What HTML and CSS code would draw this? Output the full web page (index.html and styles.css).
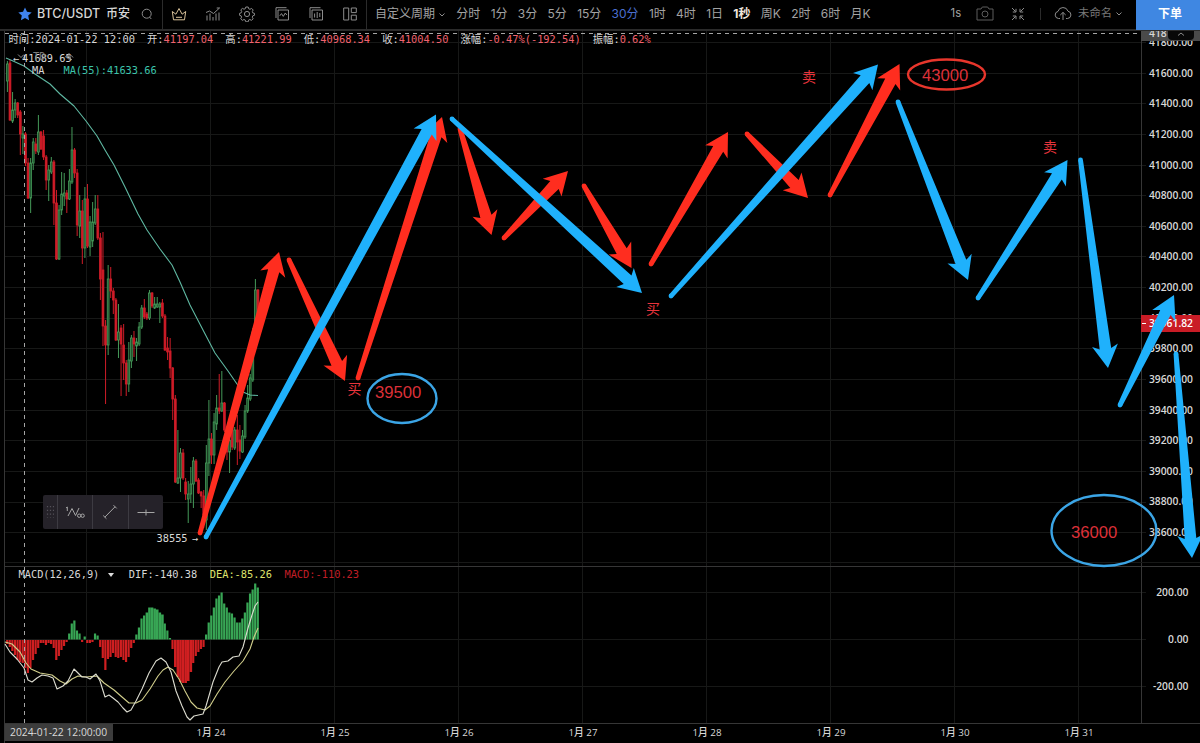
FILE: index.html
```html
<!DOCTYPE html>
<html lang="zh-CN">
<head>
  <meta charset="UTF-8">
  <meta name="viewport" content="width=device-width, initial-scale=1.0">
  <title>BTC/USDT 币安</title>
  <link rel="stylesheet" href="styles.css">
</head>
<body>
  <header class="toolbar">
    <div class="symbol">
      <svg width="14" height="14" viewBox="0 0 14 14"><path fill="#3f83f0" d="M7 .5l2 4.3 4.7.6-3.5 3.2.9 4.7L7 11l-4.1 2.3.9-4.7L.3 5.4 5 4.8z"/></svg>
      <span class="pair">BTC/USDT</span>
      <span class="exchange">币安</span>
      <svg class="icon search" width="12" height="12" viewBox="0 0 12 12"><circle cx="5.7" cy="5.7" r="4.5"/><path d="M8.5 9l1.8 2"/></svg>
    </div>
    <div class="tools">
      <svg class="icon crown" width="16" height="16" viewBox="0 0 16 16"><path d="M2.5 13.8L1.3 5.5l3.6 2.7L8 2.5l3.1 5.7 3.6-2.7-1.2 8.3zM5 11.3h6"/></svg>
      <svg class="icon" width="16" height="16" viewBox="0 0 16 16"><path d="M1 6.5L4.5 5l4 2.5 6-5.5M11.7 2h3M2 14.5v-5M5 14.5v-7M8 14.5V11M11 14.5v-7M14 14.5v-8"/></svg>
      <svg class="icon" width="16" height="16" viewBox="0 0 16 16"><circle cx="8" cy="8" r="2.6"/><path d="M6.8 1h2.4l.5 1.8 1.3.5 1.6-.9 1.6 1.6-.9 1.6.5 1.3 1.8.5v1.8l-1.8.6-.5 1.4.8 1.6-1.6 1.6-1.6-.9-1.3.6-.4 1.7H6.8l-.5-1.7-1.4-.6-1.6.9-1.6-1.6.9-1.6-.5-1.4-1.7-.6V7.4l1.7-.5.6-1.4-.9-1.6 1.6-1.5 1.6.8 1.3-.5z"/></svg>
      <svg class="icon" width="16" height="16" viewBox="0 0 16 16"><path d="M4 4h10.5v10H4zM2 12V1.7h10.5M5.8 9.8l1.7-2.2 1.8 2.8 2-3.4 1.5 2"/></svg>
      <svg class="icon" width="16" height="16" viewBox="0 0 16 16"><path d="M4 4h10.5v10H4zM2 12V1.7h10.5M6.6 7.5v4M9.2 6v6M11.8 7v4"/></svg>
      <svg class="icon" width="16" height="16" viewBox="0 0 16 16"><path d="M1.7 2h5v12h-5zM9.3 2h5v4.6h-5zM9.3 9.2h5V14h-5z"/></svg>
    </div>
    <nav class="intervals">
      <span class="custom">自定义周期<svg class="icon caret" width="8" height="6" viewBox="0 0 8 6"><path d="M1.5 1.5L4 4l2.5-2.5"/></svg></span>
      <span>分时</span>
      <span>1分</span>
      <span>3分</span>
      <span>5分</span>
      <span>15分</span>
      <span class="active">30分</span>
      <span>1时</span>
      <span>4时</span>
      <span>1日</span>
      <span class="strong">1秒</span>
      <span>周K</span>
      <span>2时</span>
      <span>6时</span>
      <span>月K</span>
    </nav>
    <div class="actions">
      <span class="sec">1s</span>
      <svg class="icon dim" width="18" height="15" viewBox="0 0 18 15"><path d="M1 3h4l1.3-2h5.4L13 3h4v11H1z"/><circle cx="9" cy="8" r="3"/></svg>
      <svg class="icon collapse" width="14" height="14" viewBox="0 0 14 14"><path d="M1 1l3.5 3.5M5 1.8V5H1.8M13 1L9.5 4.5M9 1.8V5h3.2M1 13l3.5-3.5M5 12.2V9H1.8M13 13L9.5 9.5M9 12.2V9h3.2"/></svg>
      <i class="divider"></i>
      <svg class="icon" width="18" height="15" viewBox="0 0 18 15"><path d="M6 12.5H4.5A3.6 3.6 0 0 1 4 5.4 5.2 5.2 0 0 1 14 5.2a3.7 3.7 0 0 1-.4 7.3H12M9 14V6.5M6.3 9L9 6.4 11.7 9"/></svg>
      <span class="layout-name">未命名</span>
      <svg class="icon caret" width="8" height="6" viewBox="0 0 8 6"><path d="M1.5 1.5L4 4l2.5-2.5"/></svg>
    </div>
    <button class="order">下单</button>
  </header>

  <main class="chart">
    <svg class="canvas" id="plot" viewBox="0 31 1200 712"></svg>

    <section class="pane price-pane">
      <div class="legend ohlc">
        <span>时间:2024-01-22 12:00</span>
        <span>开:<b>41197.04</b></span>
        <span>高:<b>41221.99</b></span>
        <span>低:<b>40968.34</b></span>
        <span>收:<b>41004.50</b></span>
        <span>涨幅:<b>-0.47%(-192.54)</b></span>
        <span>振幅:<b>0.62%</b></span>
      </div>
      <div class="legend td"><svg class="icon" width="8" height="6" viewBox="0 0 8 6"><path d="M1 1.5L4 4.5l3-3"/></svg><span>TD</span><svg class="icon" width="10" height="9" viewBox="0 0 10 9"><path d="M1 5.5a4.4 4.4 0 0 1 8 0M2 2.5L8 8M5 1v2"/><circle cx="5" cy="5.5" r="1.5"/></svg></div>
      <div class="legend ma"><span>MA</span><span class="ma-value">MA(55):41633.66</span></div>
    </section>
    <aside class="axis price-axis" id="priceAxis"></aside>

    <section class="pane macd-pane">
      <div class="legend macd">
        <span>MACD(12,26,9)</span>
        <i class="arrow-down"></i>
        <span class="dif">DIF:-140.38</span>
        <span class="dea">DEA:-85.26</span>
        <span class="hist">MACD:-110.23</span>
      </div>
    </section>
    <aside class="axis macd-axis">
      <span>200.00</span>
      <span>0.00</span>
      <span>-200.00</span>
    </aside>

    <footer class="time-axis">
      <span class="cursor-time">2024-01-22 12:00:00</span>
      <div class="days">
        <span>1月 24</span>
        <span>1月 25</span>
        <span>1月 26</span>
        <span>1月 27</span>
        <span>1月 28</span>
        <span>1月 29</span>
        <span>1月 30</span>
        <span>1月 31</span>
      </div>
    </footer>

    <div class="hover-price">418<span class="tab"><svg class="icon" width="8" height="6" viewBox="0 0 8 6"><path d="M1 4.5L4 2l3 2.5"/></svg></span></div>
    <div class="last-price">39961.82</div>

    <div class="drawbar">
      <span class="grip"><svg width="8" height="14" viewBox="0 0 8 14"><path stroke="#55525a" stroke-width="1.2" stroke-dasharray="1.2 2.6" d="M1.5 1v12M4.5 1v12M7.5 1v12"/></svg></span>
      <span><svg class="icon" width="20" height="14" viewBox="0 0 20 14"><path d="M1 3l1.3-1v4M3 11L7 3.5l3.5 7L14 3"/><circle cx="14.2" cy="10.7" r="1.7"/><circle cx="17.6" cy="10.7" r="1.7"/></svg></span>
      <span><svg class="icon" width="16" height="16" viewBox="0 0 16 16"><path d="M2.8 13.2L13 2.8M1.2 11.5l3.2 3.2M11.5 1.2l3.2 3.2"/></svg></span>
      <span><svg class="icon" width="18" height="8" viewBox="0 0 18 8"><path d="M.5 4.5h17M9 1.5v6"/></svg></span>
    </div>

    <svg class="canvas" id="drawings" viewBox="0 31 1200 712"></svg>
  </main>

  <script src="chart.js"></script>
</body>
</html>
```
FILE: styles.css
```css
* {
  box-sizing: border-box;
}
body {
  margin: 0;
  width: 1200px;
  height: 743px;
  overflow: hidden;
  background: #000;
  color: #d8d8d8;
  font-family: "Open Sans", "Noto Sans CJK SC", sans-serif;
}
.icon {
  fill: none;
  stroke: #8c8c8c;
  stroke-width: 1;
  flex: none;
}

/* toolbar */
.toolbar {
  display: flex;
  align-items: center;
  height: 31px;
  border-bottom: 2px solid #2b2b2b;
  font-family: Inter, "Noto Sans CJK SC", sans-serif;
  font-size: 12px;
  line-height: 27px;
  color: #a3a3a3;
  white-space: nowrap;
}
.symbol {
  display: flex;
  align-items: center;
  width: 163px;
  height: 29px;
  padding: 0 0 2px 18px;
  border-right: 1px solid #2b2b2b;
  color: #d6d6d6;
}
.pair {
  width: 64px;
  margin-left: 5px;
  font-size: 12.5px;
  font-weight: 500;
}
.exchange {
  margin-left: 5px;
  font-weight: 500;
}
.search {
  margin-left: 11px;
}
.tools {
  display: flex;
  align-items: center;
  justify-content: space-between;
  width: 204px;
  height: 29px;
  padding: 0 8px 2px 8px;
  border-right: 1px solid #2b2b2b;
}
.crown {
  stroke: #d9c29a;
}
.intervals {
  display: flex;
  gap: 10.3px;
  height: 29px;
  padding-left: 8px;
}
.caret {
  margin-left: 3px;
}
.active {
  color: #4a6fd0;
}
.strong {
  color: #f0e6dd;
  font-weight: 700;
}
.actions {
  display: flex;
  align-items: center;
  height: 29px;
  padding-bottom: 2px;
  margin-left: auto;
  color: #777;
}
.sec {
  margin-right: 15px;
  font-size: 11.3px;
  color: #a3a3a3;
}
.dim {
  stroke: #5c5c5c;
}
.collapse {
  margin-left: 17px;
}
.divider {
  width: 1px;
  height: 12px;
  margin: 0 13px 0 15px;
  background: #2b2b2b;
}
.layout-name {
  margin-left: 6px;
  font-size: 11.3px;
}
.order {
  width: 64px;
  height: 30px;
  margin: 0 0 -1px 13px;
  padding: 0 0 4px 4px;
  border: 0;
  background: #3f87e2;
  color: #fff;
  font: 700 12px/26px "Noto Sans CJK SC", sans-serif;
}

/* chart area */
.chart {
  position: relative;
  display: grid;
  grid-template-columns: 1141px 59px;
  grid-template-rows: 536px 156px 20px;
  height: 712px;
  overflow: hidden;
}
.canvas {
  position: absolute;
  inset: 0;
  width: 1200px;
  height: 712px;
}
.pane {
  position: relative;
}
.legend {
  display: flex;
  font-family: "DejaVu Sans Mono", "Noto Sans CJK SC", monospace;
  font-size: 10.33px;
  line-height: 15px;
  white-space: nowrap;
}
.legend b {
  font-weight: 400;
  color: #f0626e;
}
.ohlc {
  gap: 12.1px;
  padding: 1px 0 0 8.5px;
}
.td {
  gap: 19px;
  align-items: center;
  height: 16px;
  padding: 2px 0 0 17px;
  color: #7a7a7a;
}
.td span {
  margin-left: -11px;
}
.ma {
  gap: 19px;
  padding-left: 32px;
}
.ma-value {
  color: #3cc4ac;
}
.macd {
  align-items: center;
  padding: 0 0 0 18.5px;
}
.arrow-down {
  margin: 1px 15px 0 8.5px;
  border: 3.5px solid transparent;
  border-top: 4px solid #ddd;
  border-bottom: 0;
}
.dea {
  margin-left: 12.5px;
  color: #dfe36c;
}
.hist {
  margin-left: 12.5px;
  color: #c01e26;
}
.axis {
  position: relative;
  display: flex;
  flex-direction: column;
  font-size: 10.3px;
  font-weight: 600;
  text-align: right;
  padding-right: 7px;
}
.axis span {
  flex: none;
  height: 30.64px;
  line-height: 30.64px;
}
.price-axis {
  margin-top: -4px;
}
.macd-axis {
  padding: 2px 11.5px 0 0;
}
.macd-axis span {
  height: 47px;
  line-height: 47px;
}
.time-axis {
  position: relative;
  grid-column: 1 / 3;
  display: flex;
  font-size: 9.8px;
  line-height: 20px;
}
.cursor-time {
  width: 108px;
  height: 17px;
  margin: 1px 0 0 5px;
  padding-left: 5px;
  background: #3c3c3c;
  font-size: 10.3px;
  line-height: 17px;
}
.days {
  display: flex;
  margin-left: 36px;
}
.days span {
  width: 124px;
  text-align: center;
  font-weight: 500;
}
.hover-price {
  position: absolute;
  left: 1141px;
  top: 0;
  width: 59px;
  height: 10px;
  padding-left: 8px;
  overflow: hidden;
  background: #4a4a4a;
  font-size: 10.3px;
  font-weight: 600;
  line-height: 5px;
}
.tab {
  position: absolute;
  left: 27px;
  top: 0;
  width: 26px;
  height: 9px;
  background: #080808;
  border-radius: 0 0 4px 4px;
  text-align: center;
}
.last-price {
  position: absolute;
  left: 1141px;
  top: 284px;
  width: 59px;
  height: 17px;
  padding-right: 7px;
  background: #c91c26;
  color: #fff;
  font-size: 10.3px;
  font-weight: 600;
  line-height: 17px;
  text-align: right;
}
.last-price::before {
  content: "";
  position: absolute;
  left: 1px;
  top: 8px;
  width: 4px;
  height: 1px;
  background: #fff;
}
.drawbar {
  position: absolute;
  left: 43px;
  top: 464px;
  display: flex;
  width: 120px;
  height: 34px;
  background: #252229;
  border-radius: 2px;
}
.drawbar span {
  display: flex;
  flex: 1;
  align-items: center;
  justify-content: center;
  border-left: 1px solid #3d3b42;
}
.drawbar .icon {
  stroke: #a5a5a5;
}
.drawbar .grip {
  flex: 0 0 14px;
  border: 0;
}

/* svg parts */
.grid-line {
  stroke: #171817;
}
.frame {
  stroke: #363636;
}
.crosshair {
  stroke: #a5a5a5;
  stroke-dasharray: 4 4;
}
.up {
  fill: #1c4f2c;
  stroke: #459a59;
}
.down {
  fill: #cf1c28;
  stroke: #cf1c28;
}
.line {
  fill: none;
  stroke-width: 1.1;
}
.marker {
  fill: #d8d8d8;
  font: 10.33px "DejaVu Sans Mono", monospace;
}
.note {
  fill: #dc3038;
  font: 16.7px "Liberation Sans", sans-serif;
}
.note-cn {
  fill: #e8343c;
  font: 400 14px "Noto Sans CJK SC", sans-serif;
}
.ring {
  fill: none;
  stroke-width: 2.4;
}
```
FILE: chart.js
```js
const NS = "http://www.w3.org/2000/svg";
const RED = "#ff2d1f";
const BLUE = "#1fb1fc";
const plot = document.getElementById("plot");
const drawings = document.getElementById("drawings");

const FIRST = 7.4;
const STEP = 124 / 48;
const barX = i => FIRST + i * STEP;

function add(parent, tag, attrs, text) {
  const el = document.createElementNS(NS, tag);
  for (const key in attrs) el.setAttribute(key, attrs[key]);
  if (text) el.textContent = text;
  parent.appendChild(el);
}
function line(x1, y1, x2, y2, cls) {
  add(plot, "line", { x1, y1, x2, y2, class: cls });
}

// price axis labels
for (let p = 41800; p >= 38600; p -= 200) {
  const label = document.createElement("span");
  label.textContent = p.toFixed(2);
  document.getElementById("priceAxis").appendChild(label);
}

// grid
for (let i = 0; i < 17; i++) {
  const y = Math.round(42 + i * 30.64) + 0.5;
  line(5, y, 1146, y, "grid-line");
}
[592.5, 639.5, 686.5].forEach(y => line(5, y, 1146, y, "grid-line"));
for (let i = 0; i < 9; i++) {
  const x = Math.round(86 + i * 124) + 0.5;
  line(x, 31, x, 723, "grid-line");
}
line(4.5, 31, 4.5, 743, "frame");
line(1141.5, 31, 1141.5, 723, "frame");
line(5, 562.5, 1200, 562.5, "grid-line");
line(5, 566.5, 1200, 566.5, "frame");
line(5, 723.5, 1200, 723.5, "frame");

// candles: direction, body top, body bottom, wick top, wick bottom
const candles = [
  ["u",64,81,61,92],["d",63,120,60,121],["u",110,121,92,123],["u",103,110,99,118],["d",103,115,102,118],
  ["d",112,134,110,155],["u",134,138,126,154],["d",134,163,132,166],["d",163,198,158,199],["u",163,198,158,213],
  ["u",142,163,138,170],["d",144,151,138,154],["u",132,152,115,155],["d",132,149,131,150],["d",136,157,130,160],
  ["d",157,180,155,190],["u",170,180,165,201],["u",162,172,157,174],["d",162,203,160,225],["d",203,259,190,260],
  ["u",210,259,205,260],["u",194,210,172,215],["u",193,196,173,206],["d",193,199,190,213],["u",181,199,169,200],
  ["u",150,182,127,184],["d",150,173,148,178],["d",173,225,169,236],["u",211,226,195,238],["d",211,248,200,264],
  ["u",199,248,187,258],["d",199,246,184,248],["u",222,247,216,256],["u",222,241,202,247],["u",209,223,195,225],
  ["d",209,238,195,240],["d",238,279,233,300],["d",270,326,232,346],["d",326,345,320,404],["u",279,345,265,355],
  ["d",279,291,267,298],["d",291,300,288,314],["d",300,340,298,341],["u",332,340,304,358],["d",328,344,325,396],
  ["d",345,363,324,380],["d",363,384,360,396],["u",360,384,342,392],["u",338,361,335,368],["d",338,344,331,357],
  ["u",342,346,338,361],["u",327,344,322,346],["u",308,327,305,329],["d",308,317,299,319],["d",314,318,312,320],
  ["u",293,318,290,320],["d",293,306,292,308],["u",304,308,297,309],["u",304,307,297,308],["u",304,307,302,323],
  ["d",303,316,299,318],["d",316,350,314,351],["d",348,352,337,360],["d",351,368,338,378],["d",368,399,367,420],
  ["d",399,482,395,483],["u",478,483,430,484],["u",453,478,448,492],["d",453,478,449,480],["d",482,494,478,500],
  ["u",494,499,481,523],["u",484,494,467,503],["u",461,484,457,508],["d",461,481,459,482],["d",480,493,478,494],
  ["d",492,496,491,508],["d",496,515,490,528],["u",463,520,445,530],["u",439,463,400,476],["d",439,455,433,464],
  ["u",422,455,413,464],["u",408,424,395,430],["d",408,411,374,414],["u",403,411,371,412],["d",403,430,402,432],
  ["d",430,452,428,460],["u",440,452,436,473],["d",425,447,415,450],["u",430,448,427,450],["d",430,442,415,465],
  ["d",440,451,425,459],["u",436,452,430,453],["u",411,437,405,439],["u",398,411,385,413],["u",378,399,374,401],
  ["u",332,380,328,382],["u",290,335,279,337],["d",290,310,289,312]
];
candles.forEach(([dir, top, bottom, high, low], i) => {
  const x = barX(i);
  const cls = dir === "u" ? "up" : "down";
  line(x, high, x, low, cls);
  add(plot, "rect", { x: x - 0.9, y: top, width: 1.8, height: bottom - top, class: cls, "stroke-width": 0.8 });
});

// MACD histogram
const hist = [
  -4,-7,-11,-15,-20,-22,-23,-28,-33,-28,-20,-14,-8,-3,-3,-5,-3,-4,-8,-20,-16,-10,-6,-2,6,
  16,19,9,6,-2,3,-3,-3,-2,6,4,-7,-18,-30,-19,-17,-13,-17,-18,-17,-20,-22,-17,-8,-3,
  5,12,21,24,27,32,32,31,30,27,25,16,9,1.5,-9,-27,-37,-42,-43,-43,-41,-32,-23,-16,-12,
  -9,-7,5,17,24,32,41,44,47,36,32,27,26,22,17,17,21,27,37,46,50,56,52
];
hist.forEach((v, i) => {
  add(plot, "rect", {
    x: barX(i) - 1.3,
    y: v > 0 ? 639.5 - v : 640,
    width: Math.abs(v) > 24 && i > 53 && i < 72 ? 2.6 : 2.2,
    height: Math.abs(v),
    fill: v > 0 ? "#38a655" : "#d01f21"
  });
});

function curve(points, stroke) {
  add(plot, "polyline", { points: points, stroke: stroke, class: "line", "stroke-linejoin": "round" });
}
// MA(55)
curve("6,58 13,61 24,66 35,74 50,84 60,94 74,106 86,121 97,136 105,150 114,165 125,187 138,214 147,230 160,249 172,265 180,282 190,305 203,330 215,353 228,371 237,384 243,392 250,395 258,395.5", "#5fb8a2");
// DEA, DIF
curve("5,642 12,644 20,652 26,663 31,669 40,673 52,675 60,681 66,684 72,679 78,676 86,677 97,676 104,683 114,690 122,697 129,703 136,703 142,700 150,689 158,676 163,670 168,667 173,670 179,679 185,691 191,702 197,708 205,710 210,706 217,694 225,682 234,671 243,661 250,649 254,637 258,628", "#d2cf8c");
curve("5,644 10,652 17,659 24,668 28,680 32,682 37,678 42,675 48,676 53,678 57,689 63,686 68,681 74,669 78,673 82,677 86,677 90,679 96,674 100,681 105,697 109,695 113,698 118,702 123,708 127,712 131,710 136,701 142,689 149,673 156,661 161,658 166,662 171,672 176,691 182,706 187,717 190,720 194,716 203,714 206,706 213,682 219,667 222,662 228,661 233,657 239,656 243,647 248,628 252,615 255,606 258,602", "#dcdcd0");

// crosshair
line(24.5, 31, 24.5, 723, "crosshair");
line(5, 33.5, 1146, 33.5, "crosshair");

add(plot, "text", { x: 13, y: 62, class: "marker" }, "←");
add(plot, "text", { x: 22, y: 62, class: "marker" }, "41689.65");
add(plot, "text", { x: 156.5, y: 542, class: "marker" }, "38555");
add(plot, "text", { x: 192, y: 542, class: "marker" }, "→");

// hand drawn arrows: tail x, tail y, tip x, tip y
const redArrows = [
  [200,533,279,252], [289,260,345,381], [358,378,442,117], [460,129,491.5,235],
  [504,238,568,171], [584,186,631.5,268], [651,264,728,132], [747,134,808,198], [830,195,899.5,64]
];
const blueArrows = [
  [206,537,436,114.5], [452,119,642,293], [671,296,878,64.5], [898,102,968,280],
  [978,298,1067.5,160], [1080.5,160,1108,368], [1120,405,1174,295], [1176,354,1192,558]
];

function arrow([x1, y1, x2, y2], color) {
  const len = Math.hypot(x2 - x1, y2 - y1);
  const ux = (x2 - x1) / len, uy = (y2 - y1) / len;
  // back: distance from the tip, side: offset from the axis
  const at = (back, side) => (x2 - ux * back - uy * side).toFixed(1) + "," + (y2 - uy * back + ux * side).toFixed(1);
  const points = [at(len, 2.4), at(19.5, 5.8), at(23, 13), at(0, 0), at(23, -13), at(19.5, -5.8), at(len, -2.4)];
  add(drawings, "polygon", { points: points.join(" "), fill: color });
  add(drawings, "circle", { cx: x1, cy: y1, r: 2.4, fill: color });
}
redArrows.forEach(a => arrow(a, RED));
blueArrows.forEach(a => arrow(a, BLUE));

add(drawings, "ellipse", { cx: 402, cy: 398.5, rx: 34.5, ry: 24.5, stroke: "#3ba5e6", class: "ring" });
add(drawings, "ellipse", { cx: 946.5, cy: 74.5, rx: 38.5, ry: 15, stroke: "#e8362c", class: "ring" });
add(drawings, "ellipse", { cx: 1104, cy: 530.5, rx: 52.5, ry: 35.5, stroke: "#3ba5e6", class: "ring" });
add(drawings, "text", { x: 375, y: 398, class: "note" }, "39500");
add(drawings, "text", { x: 922, y: 80.5, class: "note" }, "43000");
add(drawings, "text", { x: 1071, y: 537.5, class: "note" }, "36000");

add(drawings, "text", { x: 347.5, y: 394, class: "note-cn" }, "买");
add(drawings, "text", { x: 646, y: 313.5, class: "note-cn" }, "买");
add(drawings, "text", { x: 802, y: 81.5, class: "note-cn" }, "卖");
add(drawings, "text", { x: 1043, y: 152, class: "note-cn" }, "卖");
```
